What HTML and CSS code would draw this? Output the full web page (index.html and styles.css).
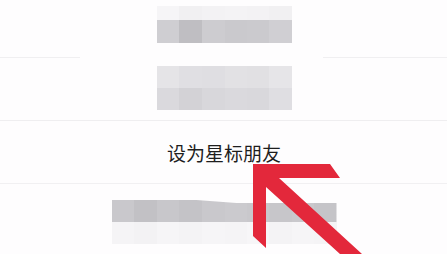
FILE: index.html
```html
<!DOCTYPE html>
<html lang="zh">
<head>
<meta charset="utf-8">
<link rel="stylesheet" href="styles.css">
</head>
<body>
<div class="page">
  <div class="row row-first">
    <div class="mosaic mosaic-a">
      <div class="tile tile-a1"></div>
      <div class="tile tile-a2"></div>
    </div>
  </div>
  <div class="split-line">
    <span class="seg seg-left"></span>
    <span class="seg seg-right"></span>
  </div>
  <div class="row row-second">
    <div class="mosaic mosaic-b">
      <div class="tile tile-b1"></div>
      <div class="tile tile-b2"></div>
    </div>
  </div>
  <div class="row row-action">
    <span class="action-label">设为星标朋友</span>
  </div>
  <div class="row row-last">
    <div class="mosaic mosaic-c">
      <div class="tile tile-c1"></div>
      <div class="tile tile-c2"></div>
    </div>
  </div>
  <svg class="pointer-arrow" viewBox="0 0 447 254" width="447" height="254" aria-hidden="true">
    <polygon points="253,164 330,164 340,178 279,178 362,254 340,254 266,187 266,248 253,236" fill="#e3283b"/>
  </svg>
</div>
</body>
</html>
```
FILE: styles.css
```css
html, body {
  margin: 0;
  padding: 0;
  background: #fefdfe;
}

.page {
  position: relative;
  width: 447px;
  height: 254px;
  overflow: hidden;
  background: #fefdfe;
  font-family: "Noto Sans CJK SC", "Noto Sans", sans-serif;
}

.row {
  display: flex;
  justify-content: center;
  box-sizing: border-box;
}

.row-first {
  height: 57px;
  padding-top: 6px;
  padding-left: 1px;
}

.split-line {
  display: flex;
  justify-content: space-between;
  height: 1px;
}

.seg {
  display: block;
  height: 1px;
  background: #f0eff1;
}

.seg-left { width: 80px; }
.seg-right { width: 124px; }

.row-second {
  height: 63px;
  padding-top: 8px;
  padding-left: 1px;
  border-bottom: 1px solid #efeef0;
}

.row-action {
  height: 63px;
  align-items: center;
  border-bottom: 1px solid #f1f0f2;
}

.action-label {
  font-size: 19px;
  line-height: 1;
  color: #1e1e1e;
  padding-left: 1px;
  margin-top: 1px;
}

.row-last {
  height: 70px;
  padding-top: 16px;
  padding-left: 1px;
}

.mosaic {
  display: flex;
  flex-direction: column;
}

.mosaic-a { width: 135px; }
.mosaic-b { width: 135px; }
.mosaic-c { width: 225px; }

.tile-a1 {
  height: 14px;
  background: linear-gradient(to right,
    #f6f5f7 0 22px, #f1f0f2 22px 45px, #f3f2f4 45px 68px,
    #f4f3f5 68px 90px, #f3f2f4 90px 112px, #f1f0f2 112px 135px);
}

.tile-a2 {
  height: 23px;
  background: linear-gradient(to right,
    #cfced2 0 22px, #bfbec2 22px 45px, #cdccd0 45px 68px,
    #cac9cd 68px 90px, #cbcace 90px 112px, #d0cfd3 112px 135px);
}

.tile-b1 {
  height: 22px;
  background: linear-gradient(to right,
    #e5e4e7 0 22px, #e0dfe3 22px 45px, #dfdee2 45px 68px,
    #e2e1e4 68px 90px, #e1e0e3 90px 112px, #e6e5e8 112px 135px);
}

.tile-b2 {
  height: 22px;
  background: linear-gradient(to right,
    #dad9dd 0 22px, #d3d2d6 22px 45px, #d8d7db 45px 68px,
    #dad9dd 68px 90px, #d9d8dc 90px 112px, #dfdee2 112px 135px);
}

.tile-c1 {
  height: 22px;
  clip-path: polygon(0 0, 85px 0, 125px 3px, 100% 3px, 100% 100%, 0 100%);
  background: linear-gradient(to right,
    #c9c8cc 0 22px, #c2c1c5 22px 45px, #c8c7cb 45px 67px,
    #c4c3c7 67px 90px, #c9c8cc 90px 113px, #cbcace 113px 135px,
    #c9c8cc 135px 157px, #c7c6ca 157px 180px, #c9c8cc 180px 202px,
    #c5c4c8 202px 225px);
}

.tile-c2 {
  height: 22px;
  background: linear-gradient(to right,
    #f5f4f6 0 22px, #f3f2f4 22px 45px, #f6f5f7 45px 67px,
    #f4f3f5 67px 90px, #f6f5f7 90px 113px, #f5f4f6 113px 135px,
    #f7f6f8 135px 157px, #f4f3f5 157px 180px, #f6f5f7 180px 202px,
    #f5f4f6 202px 225px);
}

.pointer-arrow {
  position: absolute;
  left: 0;
  top: 0;
  pointer-events: none;
}
```
